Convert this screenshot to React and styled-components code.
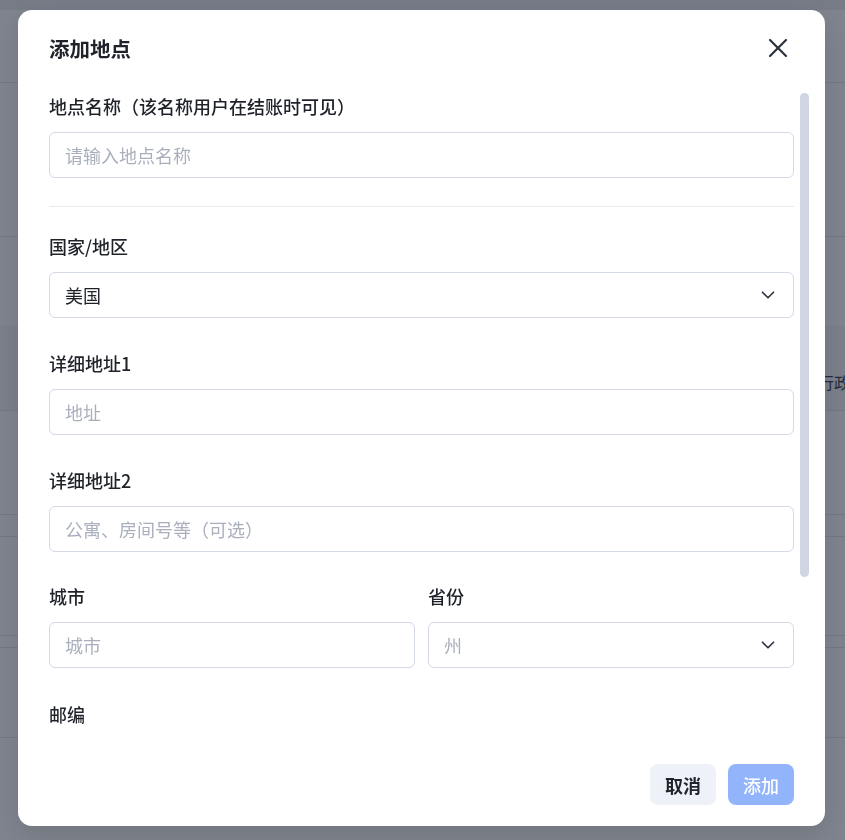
import React from "react";
import styled, { createGlobalStyle } from "styled-components";
import { X, ChevronDown } from "lucide-react";

const GlobalStyle = createGlobalStyle`
  * { box-sizing: border-box; }
  html, body { margin: 0; padding: 0; }
  body {
    font-family: "Noto Sans CJK SC", "Inter", "Noto Sans", sans-serif;
    background: #ffffff;
    color: #1f2329;
  }
`;

/* ---------- background page (under the overlay) ---------- */
const Page = styled.div`
  width: 100vw;
  height: 100vh;
  overflow: hidden;
  display: flex;
  flex-direction: column;
  background: #ffffff;
`;
const TopStrip = styled.div`
  height: 10px;
  background: #eceef1;
`;
const PageHeader = styled.div`
  height: 73px;
  border-bottom: 1px solid #e4e6ea;
`;
const BgRow = styled.div`
  display: grid;
  grid-template-columns: 200px 300px 318px 1fr;
  align-items: center;
  height: ${(p) => p.$h}px;
  background: ${(p) => (p.$band ? "#f6f7f9" : "transparent")};
  border-bottom: ${(p) => (p.$line ? "1px solid #e4e6ea" : "none")};
`;
const BgCell = styled.div`
  font-size: 16px;
  color: #3d424c;
  white-space: nowrap;
  overflow: hidden;
  padding-top: 28px;
`;

const Overlay = styled.div`
  position: fixed;
  inset: 0;
  background: rgba(15, 23, 42, 0.53);
`;

/* ---------- modal ---------- */
const Modal = styled.div`
  position: fixed;
  left: 18px;
  top: 10px;
  width: 807px;
  height: 816px;
  background: #ffffff;
  border-radius: 14px;
  display: flex;
  flex-direction: column;
  overflow: hidden;
  box-shadow: 0 10px 30px rgba(0, 0, 0, 0.12);
`;
const Header = styled.div`
  display: flex;
  align-items: center;
  justify-content: space-between;
  padding: 26px 31px 28px 31px;
  height: 78px;
`;
const Title = styled.h2`
  margin: 0;
  font-size: 20.5px;
  line-height: 24px;
  font-weight: 600;
  color: #1f2329;
`;
const CloseButton = styled.button`
  border: none;
  background: transparent;
  padding: 0;
  margin: 0;
  display: flex;
  color: #2b3340;
  cursor: pointer;
`;
const BodyWrap = styled.div`
  position: relative;
  flex: 1;
  min-height: 0;
  display: flex;
`;
const Body = styled.div`
  flex: 1;
  min-height: 0;
  overflow-y: auto;
  scrollbar-width: none;
  padding: 6px 31px 50px 31px;
  &::-webkit-scrollbar { display: none; }
`;
const ScrollThumb = styled.div`
  position: absolute;
  right: 16px;
  top: 5px;
  width: 9px;
  height: 484px;
  border-radius: 5px;
  background: #cfd5e2;
`;
const Field = styled.div`
  display: flex;
  flex-direction: column;
  margin-top: ${(p) => (p.$first ? 0 : p.$gap ?? 33)}px;
  min-width: 0;
`;
const Label = styled.label`
  font-size: 18px;
  line-height: 24px;
  font-weight: 500;
  color: #1f2329;
  margin-bottom: 14px;
`;
const Input = styled.input`
  height: 46px;
  width: 100%;
  border: 1px solid #d4d9e8;
  border-radius: 6px;
  padding: 0 15px;
  font-family: inherit;
  font-size: 18px;
  color: #1f2329;
  background: #fff;
  outline: none;
  &::placeholder { color: #a9afbd; }
`;
const SelectBox = styled.div`
  height: 46px;
  border: 1px solid #d4d9e8;
  border-radius: 6px;
  padding: 0 14px 0 15px;
  display: flex;
  align-items: center;
  justify-content: space-between;
  font-size: 18px;
  color: ${(p) => (p.$placeholder ? "#a9afbd" : "#1f2329")};
  background: #fff;
  svg { color: #2b3340; flex-shrink: 0; }
`;
const Divider = styled.hr`
  border: none;
  height: 1px;
  background: #e8eaef;
  margin: 28px 0 27px;
`;
const TwoCol = styled.div`
  display: grid;
  grid-template-columns: 366px 1fr;
  column-gap: 13px;
  margin-top: 32px;
  & > ${Field} { margin-top: 0; }
`;
const Footer = styled.div`
  display: flex;
  justify-content: flex-end;
  gap: 12px;
  padding: 24px 31px 21px;
`;
const Button = styled.button`
  height: 41px;
  width: 66px;
  border: none;
  border-radius: 8px;
  font-family: inherit;
  font-size: 18px;
  font-weight: ${(p) => (p.$primary ? 500 : 600)};
  background: ${(p) => (p.$primary ? "#92b4fb" : "#eef1f7")};
  color: ${(p) => (p.$primary ? "#ffffff" : "#1f2329")};
  cursor: pointer;
`;

function Select({ value, placeholder }) {
  return (
    <SelectBox $placeholder={!value}>
      <span>{value || placeholder}</span>
      <ChevronDown size={22} strokeWidth={1.8} />
    </SelectBox>
  );
}

export default function App() {
  return (
    <>
      <GlobalStyle />
      <Page>
        <TopStrip />
        <PageHeader />
        <BgRow $h={154} $line />
        <BgRow $h={89} />
        <BgRow $h={85} $band $line>
          <BgCell />
          <BgCell />
          <BgCell />
          <BgCell>行政区</BgCell>
        </BgRow>
        <BgRow $h={104} $line />
        <BgRow $h={22} $line />
        <BgRow $h={99} $line />
        <BgRow $h={12} $line />
        <BgRow $h={90} $line />
      </Page>
      <Overlay />
      <Modal role="dialog">
        <Header>
          <Title>添加地点</Title>
          <CloseButton aria-label="关闭">
            <X size={32} strokeWidth={1.6} />
          </CloseButton>
        </Header>
        <BodyWrap>
          <Body>
            <Field $first>
              <Label>地点名称（该名称用户在结账时可见）</Label>
              <Input placeholder="请输入地点名称" />
            </Field>
            <Divider />
            <Field $first>
              <Label>国家/地区</Label>
              <Select value="美国" />
            </Field>
            <Field>
              <Label>详细地址1</Label>
              <Input placeholder="地址" />
            </Field>
            <Field>
              <Label>详细地址2</Label>
              <Input placeholder="公寓、房间号等（可选）" />
            </Field>
            <TwoCol>
              <Field>
                <Label>城市</Label>
                <Input placeholder="城市" />
              </Field>
              <Field>
                <Label>省份</Label>
                <Select placeholder="州" />
              </Field>
            </TwoCol>
            <Field $gap={34}>
              <Label>邮编</Label>
              <Input placeholder="邮政编码" />
            </Field>
            <Field>
              <Label>电话</Label>
              <Input placeholder="电话（可选）" />
            </Field>
          </Body>
          <ScrollThumb />
        </BodyWrap>
        <Footer>
          <Button>取消</Button>
          <Button $primary>添加</Button>
        </Footer>
      </Modal>
    </>
  );
}
